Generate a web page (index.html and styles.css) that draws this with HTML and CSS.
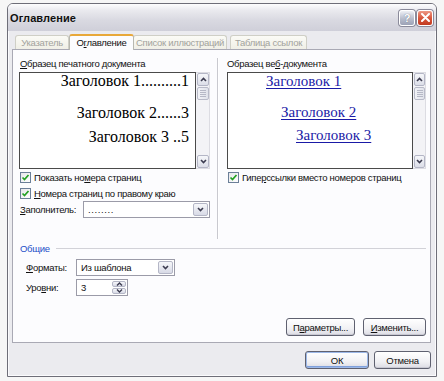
FILE: index.html
```html
<!DOCTYPE html>
<html lang="ru">
<head>
<meta charset="utf-8">
<title>Оглавление</title>
<link rel="stylesheet" href="styles.css">
</head>
<body>
<div class="screen">
  <div class="win">
    <div class="titlebar">
      <span class="title">Оглавление</span>
      <div class="tbtns">
        <span class="tb help">?</span>
        <span class="tb close"><svg width="9" height="9" viewBox="0 0 9 9"><path d="M1 1L8 8M8 1L1 8" stroke="#fff" stroke-width="2" stroke-linecap="round"/></svg></span>
      </div>
    </div>
    <div class="client">
      <div class="tabs">
        <span class="tab t1">Указатель</span>
        <span class="tab active">О<u>г</u>лавление</span>
        <span class="tab t3">Список иллюстраций</span>
        <span class="tab t4">Таблица ссылок</span>
      </div>
      <div class="panel">
        <div class="samples">
          <div class="col left">
            <div class="lbl"><u>О</u>бразец печатного документа</div>
            <div class="preview">
              <div class="page print">
                <div class="p1">Заголовок 1..........1</div>
                <div class="p2">Заголовок 2......3</div>
                <div class="p3">Заголовок 3 ..5</div>
              </div>
              <div class="sbar">
                <span class="sbtn"><svg width="7" height="5" viewBox="0 0 7 5"><path d="M1 4L3.5 1.5L6 4" fill="none" stroke="#3c3c50" stroke-width="1.6"/></svg></span>
                <span class="thumb"><i></i><i></i><i></i><i></i></span>
                <span class="track"></span>
                <span class="sbtn"><svg width="7" height="5" viewBox="0 0 7 5"><path d="M1 1L3.5 3.5L6 1" fill="none" stroke="#3c3c50" stroke-width="1.6"/></svg></span>
              </div>
            </div>
            <div class="chk"><span class="box"><svg width="9" height="9" viewBox="0 0 9 9"><path d="M1.5 4.5L3.5 6.5L7.5 2" fill="none" stroke="#22a022" stroke-width="1.7"/></svg></span>Показать но<u>м</u>ера страниц</div>
            <div class="chk"><span class="box"><svg width="9" height="9" viewBox="0 0 9 9"><path d="M1.5 4.5L3.5 6.5L7.5 2" fill="none" stroke="#22a022" stroke-width="1.7"/></svg></span><u>Н</u>омера страниц по правому краю</div>
            <div class="fillrow">
              <span><u>З</u>аполнитель:</span>
              <div class="combo fill"><span class="cval dots">........</span><span class="dd"><svg width="7" height="5" viewBox="0 0 7 5"><path d="M1 1L3.5 3.5L6 1" fill="none" stroke="#3c3c50" stroke-width="1.6"/></svg></span></div>
            </div>
          </div>
          <div class="vsep"></div>
          <div class="col right">
            <div class="lbl">Образец ве<u>б</u>-документа</div>
            <div class="preview">
              <div class="page web">
                <div class="w1"><a>Заголовок 1</a></div>
                <div class="w2"><a>Заголовок 2</a></div>
                <div class="w3"><a>Заголовок 3</a></div>
              </div>
              <div class="sbar">
                <span class="sbtn"><svg width="7" height="5" viewBox="0 0 7 5"><path d="M1 4L3.5 1.5L6 4" fill="none" stroke="#3c3c50" stroke-width="1.6"/></svg></span>
                <span class="thumb"><i></i><i></i><i></i><i></i></span>
                <span class="track"></span>
                <span class="sbtn"><svg width="7" height="5" viewBox="0 0 7 5"><path d="M1 1L3.5 3.5L6 1" fill="none" stroke="#3c3c50" stroke-width="1.6"/></svg></span>
              </div>
            </div>
            <div class="chk"><span class="box"><svg width="9" height="9" viewBox="0 0 9 9"><path d="M1.5 4.5L3.5 6.5L7.5 2" fill="none" stroke="#22a022" stroke-width="1.7"/></svg></span>Гипе<u>р</u>ссылки вместо номеров страниц</div>
          </div>
        </div>
        <div class="group">
          <div class="gtitle"><span>Общие</span><i></i></div>
          <div class="frow">
            <span class="flbl"><u>Ф</u>орматы:</span>
            <div class="combo fmt"><span class="cval">Из шаблона</span><span class="dd"><svg width="7" height="5" viewBox="0 0 7 5"><path d="M1 1L3.5 3.5L6 1" fill="none" stroke="#3c3c50" stroke-width="1.6"/></svg></span></div>
          </div>
          <div class="frow lv">
            <span class="flbl">Уро<u>в</u>ни:</span>
            <div class="spin"><span class="cval">3</span><span class="sp"><span><svg width="7" height="4" viewBox="0 0 7 4"><path d="M1 3.5L3.5 1L6 3.5" fill="none" stroke="#3c3c50" stroke-width="1.4"/></svg></span><span><svg width="7" height="4" viewBox="0 0 7 4"><path d="M1 .5L3.5 3L6 .5" fill="none" stroke="#3c3c50" stroke-width="1.4"/></svg></span></span></div>
          </div>
        </div>
        <div class="pbtns">
          <span class="btn b-par">П<u>а</u>раметры...</span>
          <span class="btn b-chg"><u>И</u>зменить...</span>
        </div>
      </div>
      <div class="footer">
        <span class="btn b-ok">ОК</span>
        <span class="btn b-cancel">Отмена</span>
      </div>
    </div>
  </div>
</div>
</body>
</html>
```

FILE: styles.css
```css
* { box-sizing: border-box; }
html, body { margin: 0; padding: 0; }
body {
  width: 444px;
  height: 381px;
  overflow: hidden;
  background: #f6f6f6;
  font-family: "Liberation Sans", Arial, sans-serif;
  font-size: 9.5px;
  letter-spacing: -0.3px;
  color: #111;
}
u { text-decoration: underline; text-underline-offset: 1px; }
.screen { padding: 3px 0 0 7px; }
.win {
  width: 430px;
  height: 374px;
  border: 1px solid #6e6e78;
  border-radius: 6px 6px 0 0;
  background: #ebebef;
  display: flex;
  flex-direction: column;
  box-shadow: inset 0 0 0 1px #fbfbfd;
}
.titlebar {
  height: 27px;
  flex: none;
  display: flex;
  align-items: center;
  justify-content: space-between;
  padding: 0 3px 0 2px;
  border-radius: 5px 5px 0 0;
  background: linear-gradient(#fdfdfe 0, #e9e9ee 25%, #d9d9e1 60%, #cfcfd9 100%);
}
.title { font-weight: bold; font-size: 11px; color: #111; letter-spacing: 0.1px; }
.tbtns { display: flex; gap: 2px; }
.tb {
  width: 16px; height: 16px;
  border-radius: 3px;
  display: flex; align-items: center; justify-content: center;
  border: 1px solid #fff;
  box-shadow: 0 0 0 1px #8a8a9a;
}
.help {
  background: linear-gradient(#eef0f5, #b8bdcc 55%, #9ca2b6);
  color: #fff; font-weight: bold; font-size: 11px; letter-spacing: 0;
  text-shadow: 0 0 1px #555a70;
}
.close { background: linear-gradient(#ee9a86, #d8573c 50%, #c23a20); }

.client {
  flex: 1;
  display: flex;
  flex-direction: column;
  padding: 2px 5px 0 4px;
}
.tabs { display: flex; align-items: flex-end; padding-left: 3px; height: 16px; }
.tab {
  height: 14px;
  line-height: 13px;
  padding: 0 5px;
  background: linear-gradient(#fbfbf6, #f0efe6);
  border: 1px solid #cfcfc6;
  border-bottom: none;
  border-radius: 3px 3px 0 0;
  color: #a2a29c;
  margin-right: 2px;
  white-space: nowrap;
  text-align: center;
}
.t1 { width: 54px; }
.t3 { width: 94px; margin-left: 1px; padding: 0 2px; }
.t4 { width: 77px; margin-left: 1px; padding: 0 3px; }
.tab.active {
  height: 16px;
  width: 65px;
  margin: 0 0 -1px -2px;
  position: relative;
  background: #fcfcfe;
  border-color: #b8b8b0;
  border-top: 2px solid #e8a83a;
  color: #111;
  line-height: 13px;
  padding: 0 4px;
}
.tab.active + .tab { margin-left: -1px; }

.panel {
  height: 294px;
  flex: none;
  background: #fcfcfe;
  border: 1px solid #a9a9b4;
  padding: 8px 4px 0 6px;
  display: flex;
  flex-direction: column;
}
.samples { display: flex; height: 181px; }
.col { display: flex; flex-direction: column; }
.left { width: 191px; }
.right { width: 199px; margin-left: 8px; }
.vsep { width: 2px; margin-left: 7px; border-left: 1px solid #c9c9cf; border-right: 1px solid #fff; }
.lbl { height: 12px; line-height: 12px; margin-bottom: 2px; white-space: nowrap; padding-left: 1px; }
.right .lbl { margin-left: -1px; }
.preview { display: flex; height: 97px; }
.page {
  flex: 1;
  background: #fff;
  border: 1px solid #4a4a4a;
  font-family: "Liberation Serif", "Times New Roman", serif;
  letter-spacing: 0;
  color: #000;
  overflow: hidden;
}
.print { font-size: 16px; line-height: 16px; text-align: right; padding-right: 6px; }
.print .p2 { margin-top: 16px; }
.print .p3 { margin-top: 8px; }
.web { font-size: 15px; line-height: 16px; padding-top: 0; }
.web a { color: #1a1aa6; text-decoration: underline; text-underline-offset: 2px; }
.web .w1 { padding-left: 38px; }
.web .w2 { padding-left: 53px; margin-top: 15px; }
.web .w3 { padding-left: 68px; margin-top: 7px; }
.sbar {
  width: 14px;
  display: flex;
  flex-direction: column;
  background: #f3f3f6;
  border: 1px solid #dcdce2;
  border-left: none;
  padding: 0 0 0 1px;
}
.right .sbar { width: 13px; }
.sbtn {
  height: 13px;
  flex: none;
  border: 1px solid #b4b6c6;
  border-radius: 2px;
  background: linear-gradient(#f6f7fa, #dcdee8);
  display: flex; align-items: center; justify-content: center;
}
.thumb {
  height: 13px; flex: none; margin-top: 1px;
  border: 1px solid #b8bac8; border-radius: 2px;
  background: linear-gradient(90deg, #f2f3f7, #e0e2ea);
  display: flex; flex-direction: column; align-items: center; justify-content: center; gap: 1px;
}
.thumb i { display: block; width: 6px; height: 1px; background: #b6b8c6; }
.track { flex: 1; }

.chk { display: flex; align-items: center; height: 16px; white-space: nowrap; }
.left .chk:first-of-type { margin-top: 1px; }
.box {
  width: 11px; height: 11px; flex: none;
  margin: 0 3px 0 1px;
  border: 1px solid #6b7f98;
  background: linear-gradient(135deg, #e6e6ea, #fff);
  display: flex; align-items: center; justify-content: center;
}
.fillrow { display: flex; align-items: center; justify-content: space-between; height: 17px; }
.fillrow > span { padding-left: 1px; }
.combo {
  height: 17px;
  border: 1px solid #9b9ba8;
  background: #fff;
  display: flex;
  align-items: stretch;
  padding: 1px;
}
.fill { width: 127px; }
.cval { flex: 1; line-height: 13px; padding-left: 3px; }
.dots { letter-spacing: 0.6px; }
.dd {
  width: 15px; flex: none;
  border: 1px solid #b4b6c6;
  border-radius: 2px;
  background: linear-gradient(#f6f7fa, #d8dae6);
  display: flex; align-items: center; justify-content: center;
}

.group { margin-top: 3px; }
.gtitle { display: flex; align-items: center; height: 12px; }
.gtitle span { color: #1c4fc8; padding-left: 1px; }
.gtitle i { flex: 1; height: 1px; background: #d2d2d8; margin-left: 6px; }
.frow { display: flex; align-items: center; margin-top: 5px; padding-left: 7px; height: 17px; }
.frow.lv { margin-top: 3px; }
.flbl { width: 50px; }
.fmt { width: 99px; }
.spin {
  width: 52px; height: 17px;
  border: 1px solid #9b9ba8; background: #fff;
  display: flex; padding: 1px;
}
.sp { width: 14px; display: flex; flex-direction: column; gap: 1px; }
.sp span {
  flex: 1;
  border: 1px solid #b4b6c6; border-radius: 2px;
  background: linear-gradient(#f6f7fa, #d8dae6);
  display: flex; align-items: center; justify-content: center;
}

.pbtns { display: flex; justify-content: flex-end; gap: 8px; margin-top: 22px; }
.btn {
  height: 18px;
  border: 1px solid #5f6170;
  border-radius: 3px;
  background: linear-gradient(#ffffff, #f1f1f4 60%, #dcdce4);
  box-shadow: inset 0 -1px 0 #c8c8d2;
  display: flex; align-items: center; justify-content: center;
  white-space: nowrap;
}
.b-par { width: 69px; }
.b-chg { width: 63px; }
.footer { display: flex; justify-content: flex-end; gap: 5px; margin-top: 8px; }
.b-ok { width: 64px; box-shadow: inset 0 0 0 1px #9cb8e8, inset 0 -2px 0 #7fa0dc; }
.b-cancel { width: 57px; }
```
